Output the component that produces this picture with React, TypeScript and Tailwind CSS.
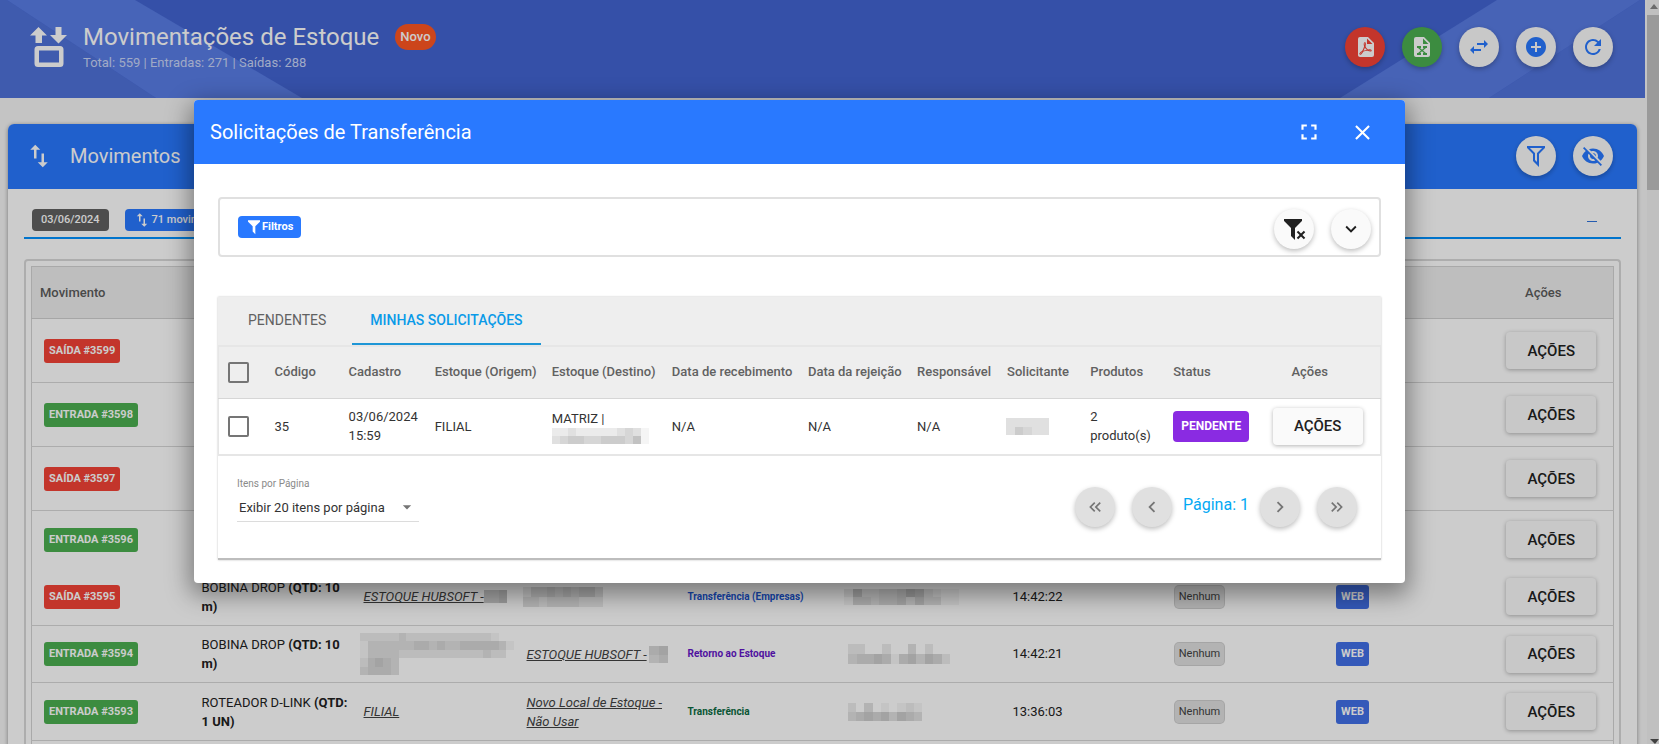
import React from "react";
import {
  MdAddCircle,
  MdArrowDropDown,
  MdClose,
  MdFullscreen,
  MdKeyboardArrowDown,
  MdKeyboardArrowLeft,
  MdKeyboardArrowRight,
  MdKeyboardDoubleArrowLeft,
  MdKeyboardDoubleArrowRight,
  MdRefresh,
  MdVisibilityOff,
} from "react-icons/md";

const paths = {
  pdf: "M14,9H19.5L14,3.5V9M7,2H15L21,8V20A2,2 0 0,1 19,22H7C5.89,22 5,21.1 5,20V4A2,2 0 0,1 7,2M11.93,12.44C12.34,13.34 12.86,14.08 13.46,14.59L13.87,14.91C13,15.07 11.8,15.35 10.53,15.84V15.84L10.42,15.88L10.92,14.84C11.37,13.97 11.7,13.18 11.93,12.44M18.41,16.25C18.59,16.07 18.68,15.84 18.69,15.59C18.72,15.39 18.67,15.2 18.57,15.04C18.28,14.57 17.53,14.35 16.29,14.35L15,14.42L14.13,13.84C13.5,13.32 12.93,12.41 12.53,11.28L12.57,11.14C12.9,9.81 13.21,8.2 12.55,7.54C12.39,7.38 12.17,7.3 11.94,7.3H11.7C11.33,7.3 11,7.69 10.91,8.07C10.54,9.4 10.76,10.13 11.13,11.34V11.35C10.88,12.23 10.56,13.25 10.05,14.28L9.09,16.08L8.2,16.57C7,17.32 6.43,18.16 6.32,18.69C6.28,18.88 6.3,19.05 6.37,19.23L6.4,19.28L6.88,19.59L7.32,19.7C8.13,19.7 9.05,18.75 10.29,16.63L10.47,16.56C11.5,16.23 12.78,16 14.5,15.81C15.53,16.32 16.74,16.55 17.5,16.55C17.94,16.55 18.24,16.44 18.41,16.25M18,15.54L18.09,15.65C18.08,15.75 18.05,15.76 18,15.78H17.96L17.77,15.8C17.31,15.8 16.6,15.61 15.87,15.29C15.96,15.19 16,15.19 16.1,15.19C17.5,15.19 17.9,15.44 18,15.54M8.83,17C8.18,18.19 7.59,18.85 7.14,19C7.19,18.62 7.64,17.96 8.35,17.31L8.83,17M11.85,10.09C11.62,9.19 11.61,8.46 11.78,8.04L11.85,7.92L12,7.97C12.17,8.21 12.19,8.53 12.09,9.07L12.06,9.23L11.9,10.05L11.85,10.09Z",
  excel:
    "M13,9H18.5L13,3.5V9M6,2H14L20,8V20A2,2 0 0,1 18,22H6C4.89,22 4,21.1 4,20V4A2,2 0 0,1 6,2M17,11H13V13H14L12,14.67L10,13H11V11H7V13H8L11,15.5L8,18H7V20H11V18H10L12,16.33L14,18H13V20H17V18H16L13,15.5L16,13H17V11Z",
  swapHorizontal:
    "M21,9L17,5V8H10V10H17V13M7,11L3,15L7,19V16H14V14H7V11Z",
  swapVertical: "M9,3L5,7H8V14H10V7H13M16,17V10H14V17H11L15,21L19,17H16Z",
  filter: "M3,2H21V2H21V4H20.92L14,10.92V22.91L10,18.91V10.91L3.09,4H3V2Z",
  filterOutline:
    "M3,2H21V2H21V4H20.92L15,9.92V22.91L9,16.91V9.91L3.09,4H3V2M11,16.08L13,18.08V9H13.09L18.09,4H5.92L10.92,9H11V16.08Z",
  filterRemove:
    "M14.76,20.83L17.6,18L14.76,15.17L16.17,13.76L19,16.57L21.83,13.76L23.24,15.17L20.43,18L23.24,20.83L21.83,22.24L19,19.4L16.17,22.24L14.76,20.83M2,2H20V2H20V4H19.92L13,10.92V22.91L9,18.91V10.91L2.09,4H2V2Z",
};

function Icon({ name, className }: { name: keyof typeof paths; className: string }) {
  return (
    <svg viewBox="0 0 24 24" className={className} fill="currentColor" aria-hidden="true">
      <path d={paths[name]} />
    </svg>
  );
}

/** Pixelated block that hides a private value. Each digit is a shade, 0 = clear, 9 = darkest. */
function Mosaic({ rows, className }: { rows: string[]; className: string }) {
  const cols = rows[0].length;
  return (
    <svg
      viewBox={`0 0 ${cols} ${rows.length}`}
      preserveAspectRatio="none"
      shapeRendering="crispEdges"
      className={className}
      aria-hidden="true"
    >
      {rows.map((row, y) =>
        row
          .split("")
          .map((d, x) => (
            <rect key={`${x}-${y}`} x={x} y={y} width="1" height="1" fill="black" fillOpacity={Number(d) * 0.04} />
          )),
      )}
    </svg>
  );
}

function RoundButton({
  label,
  className,
  children,
}: {
  label: string;
  className: string;
  children: React.ReactNode;
}) {
  return (
    <button
      type="button"
      aria-label={label}
      className={`flex size-10 shrink-0 items-center justify-center rounded-full shadow-[0_2px_5px_rgba(0,0,0,0.26)] ${className}`}
    >
      {children}
    </button>
  );
}

function ActionButton() {
  return (
    <button
      type="button"
      className="h-[37px] w-[90px] rounded bg-[#fafafa] text-[15px] font-medium text-[#212121] shadow-[0_1px_4px_rgba(0,0,0,0.3)]"
    >
      AÇÕES
    </button>
  );
}

type Movement = {
  id: string;
  kind: "in" | "out";
  height: string;
  product?: React.ReactNode;
  origin?: React.ReactNode;
  target?: React.ReactNode;
  type?: React.ReactNode;
  user?: React.ReactNode;
  time?: string;
  line?: boolean;
};

const linkClass = "italic text-[#424242] underline";

const movements: Movement[] = [
  { id: "SAÍDA #3599", kind: "out", height: "h-16", line: true },
  { id: "ENTRADA #3598", kind: "in", height: "h-16", line: true },
  { id: "SAÍDA #3597", kind: "out", height: "h-16", line: true },
  { id: "ENTRADA #3596", kind: "in", height: "h-[58px]" },
  {
    id: "SAÍDA #3595",
    kind: "out",
    height: "h-[57px]",
    line: true,
    product: (
      <>
        BOBINA DROP <b className="font-bold">(QTD: 10</b>
        <br />
        <b className="font-bold">m)</b>
      </>
    ),
    origin: (
      <span className="flex items-center">
        <a href="#origem" className={linkClass}>
          ESTOQUE HUBSOFT -
        </a>
        <Mosaic rows={["556"]} className="h-[13px] w-[23px]" />
      </span>
    ),
    target: <Mosaic rows={["2445454553", "3323333222"]} className="-ml-1 h-5 w-20" />,
    type: <span className="text-[#1a57d6]">Transferência (Empresas)</span>,
    user: <Mosaic rows={["26334457632110", "14434453533110"]} className="h-4 w-[124px]" />,
    time: "14:42:22",
  },
  {
    id: "ENTRADA #3594",
    kind: "in",
    height: "h-[57px]",
    line: true,
    product: (
      <>
        BOBINA DROP <b className="font-bold">(QTD: 10</b>
        <br />
        <b className="font-bold">m)</b>
      </>
    ),
    origin: (
      <Mosaic
        rows={["22222322222222222100", "13333334434334444431", "13333222222222223220", "24543000000000000000", "34443000000000000000"]}
        className="-ml-1 h-[42px] w-[154px]"
      />
    ),
    target: (
      <span className="flex items-center">
        <a href="#destino" className={linkClass}>
          ESTOQUE HUBSOFT -
        </a>
        <Mosaic rows={["45", "34"]} className="ml-0.5 h-[17px] w-[19px]" />
      </span>
    ),
    type: <span className="text-[#6415c8]">Retorno ao Estoque</span>,
    user: <Mosaic rows={["220020030200", "344541453542"]} className="ml-1 h-5 w-[102px]" />,
    time: "14:42:21",
  },
  {
    id: "ENTRADA #3593",
    kind: "in",
    height: "h-[58px]",
    line: true,
    product: (
      <>
        ROTEADOR D-LINK <b className="font-bold">(QTD:</b>
        <br />
        <b className="font-bold">1 UN)</b>
      </>
    ),
    origin: (
      <a href="#origem" className={linkClass}>
        FILIAL
      </a>
    ),
    target: (
      <a href="#destino" className={linkClass}>
        Novo Local de Estoque - Não Usar
      </a>
    ),
    type: <span className="text-[#0b6b42]">Transferência</span>,
    user: <Mosaic rows={["203010121", "345453543"]} className="ml-1 h-[18px] w-[74px]" />,
    time: "13:36:03",
  },
];

function Banner() {
  return (
    <header className="relative flex h-[98px] items-center overflow-hidden bg-[#4365d2] pr-8 pb-1 pl-[30px]">
      <svg className="absolute inset-y-0 left-0 h-full w-[302px]" viewBox="0 0 302 98" aria-hidden="true">
        <path d="M0 0H7L156 98H0Z" fill="#4f72da" />
        <path d="M7 0H135L302 98H156Z" fill="#597de6" />
      </svg>
      <svg className="absolute inset-y-0 right-0 h-full w-[305px]" viewBox="0 0 305 98" aria-hidden="true">
        <path d="M300 0H305V98H149Z" fill="#5073dc" />
        <path d="M157 0H300L149 98H0Z" fill="#597ce4" />
      </svg>
      <svg viewBox="0 0 38 42" className="relative h-[42px] w-[38px] text-white" fill="currentColor" aria-hidden="true">
        <path d="M8.5 1L17 9.5H12V17H5.500V9.500H0ZM28.500 17.500L37 9H31.500V1H25.500V9H20Z" />
        <path
          fillRule="evenodd"
          d="M8 20H30Q33.500 20 33.500 23.500V37.500Q33.500 41 30 41H8Q4.500 41 4.500 37.500V23.500Q4.500 20 8 20ZM9 24.500V36.500H29V24.500Z"
        />
      </svg>
      <div className="relative ml-[15px]">
        <div className="flex items-center gap-4">
          <h1 className="text-2xl leading-8 text-white">Movimentações de Estoque</h1>
          <span className="rounded-full bg-[#ff5722] px-[5px] text-[13px] leading-[26px] font-medium text-white">Novo</span>
        </div>
        <p className="text-[13px] leading-5 text-[#c9d5f8]">Total: 559 | Entradas: 271 | Saídas: 288</p>
      </div>
      <div className="relative ml-auto flex gap-[17px]">
        <RoundButton label="Exportar PDF" className="bg-[#f44336] text-white">
          <Icon name="pdf" className="size-6" />
        </RoundButton>
        <RoundButton label="Exportar Excel" className="bg-[#4caf50] text-white">
          <Icon name="excel" className="size-6" />
        </RoundButton>
        <RoundButton label="Transferências" className="bg-[#fafafa] text-[#2979ff]">
          <Icon name="swapHorizontal" className="size-6" />
        </RoundButton>
        <RoundButton label="Adicionar" className="bg-[#fafafa] text-[#2979ff]">
          <MdAddCircle className="size-6" />
        </RoundButton>
        <RoundButton label="Atualizar" className="bg-[#fafafa] text-[#2979ff]">
          <MdRefresh className="size-6" />
        </RoundButton>
      </div>
    </header>
  );
}

function MovementsTable() {
  return (
    <div className="mx-4 mt-5 rounded-t border-2 border-b-0 border-[#d9d9d9] px-[5px] pt-[5px]">
      <table className="w-full table-fixed border border-[#d4d4d4] text-[13px] leading-5">
        <colgroup>
          <col className="w-[162px]" />
          <col className="w-[162px]" />
          <col className="w-[163px]" />
          <col className="w-[161px]" />
          <col className="w-[159px]" />
          <col className="w-[166px]" />
          <col className="w-[135px]" />
          <col className="w-[120px]" />
          <col className="w-[186px]" />
          <col className="w-[168px]" />
        </colgroup>
        <thead>
          <tr className="h-[52px] border-b border-[#d0d0d0] bg-[#eee] text-[#5c5c5c]">
            <th scope="col" className="pl-2 text-left font-medium">
              Movimento
            </th>
            <td colSpan={8} />
            <th scope="col" className="pl-7 text-center font-medium">
              Ações
            </th>
          </tr>
        </thead>
        <tbody className="text-[#212121]">
          {movements.map((m) => (
            <tr key={m.id} className={`${m.height} ${m.line ? "border-b border-[#d8d8d8]" : ""}`}>
              <td className="pl-3">
                <span
                  className={`inline-block rounded-[3px] px-[5px] text-[11px] leading-6 font-bold text-white ${
                    m.kind === "out" ? "bg-[#f44336]" : "bg-[#4caf50]"
                  }`}
                >
                  {m.id}
                </span>
              </td>
              <td className="pl-2 leading-[19px] whitespace-nowrap">{m.product}</td>
              <td className="pl-2 leading-[19px] whitespace-nowrap">{m.origin}</td>
              <td className="pl-2 leading-[19px]">{m.target}</td>
              <td className="pl-2 text-[10px] font-bold">{m.type}</td>
              <td className="pl-[5px]">{m.user}</td>
              <td className="pl-2">{m.time}</td>
              <td className="text-center">
                {m.time && (
                  <span className="inline-block rounded bg-[#e0e0e0] px-1 text-[11px] leading-[22px] text-[#424242] ring-1 ring-[#cfcfcf]">
                    Nenhum
                  </span>
                )}
              </td>
              <td className="text-center">
                {m.time && (
                  <span className="inline-block rounded-[3px] bg-[#4170e8] px-[5px] text-[11px] leading-6 font-bold text-white">
                    WEB
                  </span>
                )}
              </td>
              <td className="pl-11 text-center">
                <ActionButton />
              </td>
            </tr>
          ))}
          <tr className="h-16">
            <td colSpan={10} />
          </tr>
        </tbody>
      </table>
    </div>
  );
}

function MovementsCard() {
  return (
    <main className="mx-2 mt-[26px] rounded-t-md bg-white shadow-[0_1px_4px_rgba(0,0,0,0.4)]">
      <div className="flex h-[65px] items-center rounded-t-md bg-[#2979ff] pr-6 pb-0.5 pl-4 text-white">
        <Icon name="swapVertical" className="size-[30px]" />
        <h2 className="ml-4 text-xl">Movimentos</h2>
        <div className="ml-auto flex gap-[17px]">
          <RoundButton label="Filtrar" className="bg-[#fafafa] text-[#2979ff]">
            <Icon name="filterOutline" className="size-6" />
          </RoundButton>
          <RoundButton label="Ocultar" className="bg-[#fafafa] text-[#2979ff]">
            <MdVisibilityOff className="size-6" />
          </RoundButton>
        </div>
      </div>
      <div className="mx-4 flex h-[50px] items-start gap-4 border-b-2 border-[#0091ff] pt-5 pr-6 pl-2 text-[11px] leading-[22px] text-white">
        <span className="rounded bg-[#616161] px-[9px] font-medium">03/06/2024</span>
        <span className="flex items-center rounded bg-[#2979ff] px-2 font-medium">
          <Icon name="swapVertical" className="mr-px size-[18px]" />
          71 movimentos
        </span>
        <button type="button" aria-label="Recolher" className="ml-auto flex h-6 items-center">
          <span className="block h-px w-2.5 bg-[#2f74dd]" />
        </button>
      </div>
      <MovementsTable />
    </main>
  );
}

function PageScrollbar() {
  return (
    <div className="flex w-[14px] shrink-0 flex-col items-center border-l-2 border-[#f5f5f5] bg-[#f1f1f1]">
      <svg viewBox="0 0 12 15" className="h-[15px] w-3" aria-hidden="true">
        <path d="M3 9L7 4L11 9Z" fill="#868686" />
      </svg>
      <div className="h-[175px] w-full bg-[#c1c1c1]" />
      <svg viewBox="0 0 12 5" className="mt-auto h-[5px] w-3" aria-hidden="true">
        <path d="M3 0H12L8 5Z" fill="#505050" />
      </svg>
    </div>
  );
}

const requestColumns = [
  "Código",
  "Cadastro",
  "Estoque (Origem)",
  "Estoque (Destino)",
  "Data de recebimento",
  "Data da rejeição",
  "Responsável",
  "Solicitante",
  "Produtos",
  "Status",
];

function Tick({ label }: { label: string }) {
  return (
    <input
      type="checkbox"
      aria-label={label}
      className="block size-[21px] appearance-none rounded-[2px] border-2 border-[#757575] bg-transparent checked:bg-[#2979ff]"
    />
  );
}

function RequestsTable() {
  return (
    <table className="w-full table-fixed border-x border-t-2 border-b-2 border-[#e6e6e6] text-[13px] leading-5">
      <colgroup>
        <col className="w-[48px]" />
        <col className="w-[74px]" />
        <col className="w-[86px]" />
        <col className="w-[117px]" />
        <col className="w-[120px]" />
        <col className="w-[136px]" />
        <col className="w-[109px]" />
        <col className="w-[90px]" />
        <col className="w-[83px]" />
        <col className="w-[83px]" />
        <col className="w-[90px]" />
        <col className="w-[125px]" />
      </colgroup>
      <thead>
        <tr className="h-[52px] border-b border-[#d6d6d6] bg-[#eee] text-left whitespace-nowrap text-[#616161]">
          <td className="pl-[9px]">
            <Tick label="Selecionar todas" />
          </td>
          {requestColumns.map((c) => (
            <th key={c} scope="col" className="pl-2 font-medium">
              {c}
            </th>
          ))}
          <th scope="col" className="pr-4 text-center font-medium">
            Ações
          </th>
        </tr>
      </thead>
      <tbody>
        <tr className="h-[57px] leading-[19px] text-[#333]">
          <td className="pl-[9px]">
            <Tick label="Selecionar solicitação 35" />
          </td>
          <td className="pl-2">35</td>
          <td className="pl-2">03/06/2024 15:59</td>
          <td className="pl-2">FILIAL</td>
          <td className="pl-2">
            MATRIZ |
            <Mosaic rows={["223222223431", "345544555461"]} className="block h-4 w-[97px]" />
          </td>
          <td className="pl-2">N/A</td>
          <td className="pl-2">N/A</td>
          <td className="pl-2">N/A</td>
          <td className="pl-[7px]">
            <Mosaic rows={["33333", "35433"]} className="h-[17px] w-[43px]" />
          </td>
          <td className="pr-3 pl-2">2 produto(s)</td>
          <td className="pl-2">
            <span className="inline-block rounded bg-[#8a2be2] px-2 text-[12px] leading-[31px] font-bold text-white">
              PENDENTE
            </span>
          </td>
          <td className="text-center">
            <ActionButton />
          </td>
        </tr>
      </tbody>
    </table>
  );
}

function Pagination() {
  return (
    <div className="flex h-[102px] items-start justify-between pr-6 pl-[19px]">
      <div className="flex w-[182px] flex-col pt-5">
        <label htmlFor="page-size" className="text-[10px] leading-4 text-[#8a8a8a]">
          Itens por Página
        </label>
        <div className="relative mt-0.5 border-b border-[#dcdcdc]">
          <select
            id="page-size"
            className="h-[27px] w-full appearance-none bg-transparent pl-0.5 text-[13px] text-[#333]"
            defaultValue="20"
          >
            <option value="20">Exibir 20 itens por página</option>
            <option value="50">Exibir 50 itens por página</option>
          </select>
          <MdArrowDropDown className="pointer-events-none absolute top-[3px] right-0.5 size-5 text-[#757575]" />
        </div>
      </div>
      <nav aria-label="Paginação" className="flex items-center pt-[31px] text-[#757575]">
        <RoundButton label="Primeira página" className="bg-[#e0e0e0]">
          <MdKeyboardDoubleArrowLeft className="size-5" />
        </RoundButton>
        <RoundButton label="Página anterior" className="ml-[17px] bg-[#e0e0e0]">
          <MdKeyboardArrowLeft className="size-[22px]" />
        </RoundButton>
        <span className="mx-[11px] pb-1 text-base whitespace-nowrap text-[#03a9f4]">Página: 1</span>
        <RoundButton label="Próxima página" className="bg-[#e0e0e0]">
          <MdKeyboardArrowRight className="size-[22px]" />
        </RoundButton>
        <RoundButton label="Última página" className="ml-[17px] bg-[#e0e0e0]">
          <MdKeyboardDoubleArrowRight className="size-5" />
        </RoundButton>
      </nav>
    </div>
  );
}

function TransferDialog() {
  return (
    <section
      role="dialog"
      aria-modal="true"
      aria-labelledby="dialog-title"
      className="w-full overflow-hidden rounded bg-white shadow-[0_8px_24px_4px_rgba(0,0,0,0.4)]"
    >
      <div className="flex h-16 items-center bg-[#2979ff] pr-[30px] pl-4 text-white">
        <h2 id="dialog-title" className="text-xl">
          Solicitações de Transferência
        </h2>
        <button type="button" aria-label="Tela cheia" className="ml-auto">
          <MdFullscreen className="size-[26px]" />
        </button>
        <button type="button" aria-label="Fechar" className="ml-7">
          <MdClose className="size-[25px]" />
        </button>
      </div>
      <div className="px-6 pt-[33px] pb-[23px]">
        <div className="flex h-[60px] items-center rounded border-2 border-[#e0e0e0] px-2 pl-[18px]">
          <span className="flex h-[22px] items-center rounded bg-[#2979ff] px-2 text-[11px] font-bold text-white">
            <Icon name="filter" className="size-4" />
            Filtros
          </span>
          <div className="mt-1 ml-auto flex gap-[17px]">
            <RoundButton label="Limpar filtros" className="bg-[#fafafa] text-[#212121]">
              <Icon name="filterRemove" className="size-6" />
            </RoundButton>
            <RoundButton label="Expandir filtros" className="bg-[#fafafa] text-[#212121]">
              <MdKeyboardArrowDown className="size-[22px]" />
            </RoundButton>
          </div>
        </div>
        <div className="mt-10 border-b-2 border-[#bdbdbd] shadow-[0_0_2px_rgba(0,0,0,0.25)]">
          <div role="tablist" className="flex h-12 gap-2 bg-[#eee] px-3 text-[14px]">
            <button type="button" role="tab" aria-selected="false" className="border-b-2 border-transparent px-[18px] text-[#616161]">
              PENDENTES
            </button>
            <button
              type="button"
              role="tab"
              aria-selected="true"
              className="border-b-2 border-[#1e96d6] px-[18px] font-medium text-[#0a9ae8]"
            >
              MINHAS SOLICITAÇÕES
            </button>
          </div>
          <RequestsTable />
          <Pagination />
        </div>
      </div>
    </section>
  );
}

export default function App() {
  return (
    <div className="relative h-screen overflow-hidden bg-[#f5f5f5] font-['Roboto',sans-serif]">
      <div className="flex h-full">
        <div className="min-w-0 flex-1">
          <Banner />
          <MovementsCard />
        </div>
        <PageScrollbar />
      </div>
      <div className="absolute inset-0 bg-black/20 pt-[100px] pr-[254px] pl-[194px]">
        <TransferDialog />
      </div>
    </div>
  );
}
